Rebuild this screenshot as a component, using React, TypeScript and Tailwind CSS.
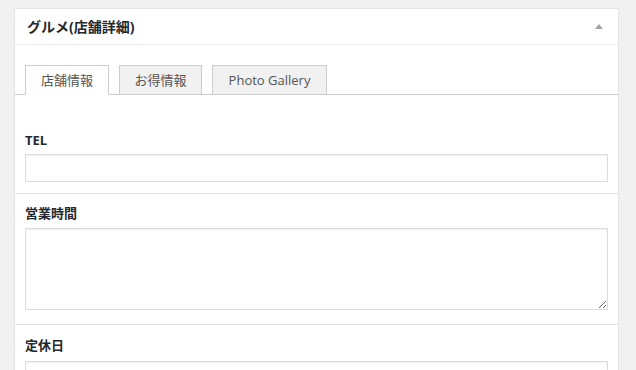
import { useState } from 'react';

const font = { fontFamily: '"Open Sans", "Noto Sans CJK JP", sans-serif' };

const tabs = [
  { label: '店舗情報', width: 'w-[84px]' },
  { label: 'お得情報', width: 'w-[83px]' },
  { label: 'Photo Gallery', width: 'w-[115px]' },
];

function Field({ label, children, className }: { label: string; children: React.ReactNode; className: string }) {
  return (
    <div className={`border-b border-[#e1e1e1] px-[10px] ${className}`}>
      <label className="block h-5 text-[13px] font-bold leading-5 text-[#23282d]">{label}</label>
      {children}
    </div>
  );
}

export default function App() {
  const [active, setActive] = useState(0);

  return (
    <div className="min-h-screen bg-[#f1f1f1] pl-[14px] pt-2" style={font}>
      <div className="w-[605px] border border-[#e5e5e5] bg-white shadow-[0_1px_1px_rgba(0,0,0,0.04)]">
        {/* header */}
        <div className="flex h-[36px] items-center justify-between border-b border-[#eee] pl-3 pr-[15px]">
          <h2 className="text-[14px] font-bold text-[#23282d]">グルメ(店舗詳細)</h2>
          <svg width="8" height="5" viewBox="0 0 8 5" aria-hidden>
            <path d="M4 0 L8 5 L0 5 Z" fill="#a0a5aa" />
          </svg>
        </div>

        {/* tabs */}
        <div className="flex gap-[10px] border-b border-[#ccc] px-[10px] pt-5">
          {tabs.map((t, i) => (
            <button
              key={t.label}
              type="button"
              onClick={() => setActive(i)}
              className={`-mb-px h-[30px] border border-[#ccc] text-center text-[13px] leading-[28px] text-[#555] ${t.width} ${
                i === active ? 'border-b-white bg-white' : 'bg-[#f1f1f1]'
              }`}
            >
              {t.label}
            </button>
          ))}
        </div>

        <Field label="TEL" className="pb-[11px] pt-[35px]">
          <input
            type="text"
            className="mt-1 block h-[28px] w-full border border-[#ddd] bg-white shadow-[inset_0_1px_2px_rgba(0,0,0,0.07)] outline-none"
          />
        </Field>

        <Field label="営業時間" className="pb-[14px] pt-[9px]">
          <textarea className="mt-[5px] block h-[82px] w-full border border-[#ddd] bg-white shadow-[inset_0_1px_2px_rgba(0,0,0,0.07)] outline-none" />
        </Field>

        <Field label="定休日" className="pb-[11px] pt-[10px]">
          <input
            type="text"
            className="mt-[6px] block h-[28px] w-full border border-[#ddd] bg-white shadow-[inset_0_1px_2px_rgba(0,0,0,0.07)] outline-none"
          />
        </Field>
      </div>
    </div>
  );
}
